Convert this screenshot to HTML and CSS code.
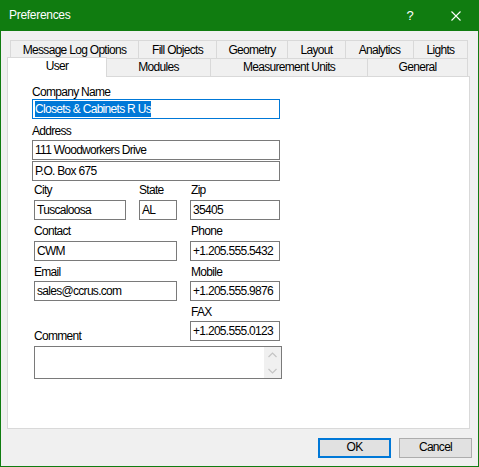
FILE: index.html
```html
<!DOCTYPE html>
<html>
<head>
<meta charset="utf-8">
<link rel="stylesheet" href="styles.css">
</head>
<body>
<div class="window">
  <div class="titlebar">
    <span class="title">Preferences</span>
    <span class="cap help">?</span>
    <span class="cap close"><svg width="10" height="10" viewBox="0 0 10 10"><path d="M0.5 0.5 L9.5 9.5 M9.5 0.5 L0.5 9.5" stroke="#fff" stroke-width="1.1" fill="none"/></svg></span>
  </div>
  <div class="body">
    <div class="tabs">
      <div class="tabrow row1">
        <div class="tab t-msg">Message Log Options</div>
        <div class="tab t-fill">Fill Objects</div>
        <div class="tab t-geo">Geometry</div>
        <div class="tab t-lay">Layout</div>
        <div class="tab t-ana">Analytics</div>
        <div class="tab t-lig">Lights</div>
      </div>
      <div class="tabrow row2">
        <div class="tab active t-user">User</div>
        <div class="tab t-mod">Modules</div>
        <div class="tab t-mea">Measurement Units</div>
        <div class="tab t-gen">General</div>
      </div>
    </div>
    <div class="panel">
      <div class="field wide f-company">
        <div class="lbl">Company Name</div>
        <div class="inp focus"><span class="sel">Closets &amp; Cabinets R Us</span></div>
      </div>
      <div class="field wide f-address">
        <div class="lbl">Address</div>
        <div class="inp">111 Woodworkers Drive</div>
        <div class="inp second">P.O. Box 675</div>
      </div>
      <div class="grid3">
        <div class="field">
          <div class="lbl">City</div>
          <div class="inp">Tuscaloosa</div>
        </div>
        <div class="field">
          <div class="lbl">State</div>
          <div class="inp">AL</div>
        </div>
        <div class="field rc">
          <div class="lbl">Zip</div>
          <div class="inp">35405</div>
        </div>
      </div>
      <div class="cols">
        <div class="col left">
          <div class="lbl">Contact</div>
          <div class="inp">CWM</div>
          <div class="lbl next">Email</div>
          <div class="inp">sales@ccrus.com</div>
          <div class="lbl comment">Comment</div>
        </div>
        <div class="col rc">
          <div class="lbl">Phone</div>
          <div class="inp">+1.205.555.5432</div>
          <div class="lbl next">Mobile</div>
          <div class="inp">+1.205.555.9876</div>
          <div class="lbl next">FAX</div>
          <div class="inp">+1.205.555.0123</div>
        </div>
      </div>
      <div class="ta">
        <div class="sb">
          <svg width="9" height="6" viewBox="0 0 9 6"><path d="M0.5 5 L4.5 1 L8.5 5" stroke="#c4c4c4" stroke-width="1.2" fill="none"/></svg>
          <svg width="9" height="6" viewBox="0 0 9 6"><path d="M0.5 1 L4.5 5 L8.5 1" stroke="#c4c4c4" stroke-width="1.2" fill="none"/></svg>
        </div>
      </div>
    </div>
    <div class="buttons">
      <div class="btn default">OK</div>
      <div class="btn">Cancel</div>
    </div>
  </div>
</div>
</body>
</html>
```
FILE: styles.css
```css
* { box-sizing: border-box; }
html, body { margin: 0; padding: 0; }
body {
  width: 479px;
  height: 467px;
  overflow: hidden;
  font-family: "Liberation Sans", Arial, sans-serif;
  font-size: 12px;
  letter-spacing: -0.7px;
  color: #000;
  background: #f0f0f0;
}
.window { width: 479px; height: 467px; }
.titlebar {
  display: flex;
  height: 31px;
  background: #107c10;
  color: #fff;
}
.title {
  flex: 1;
  padding-left: 9px;
  line-height: 31px;
  letter-spacing: -0.3px;
}
.cap {
  width: 46px;
  height: 31px;
  display: flex;
  align-items: center;
  justify-content: center;
}
.help { display: block; text-align: center; line-height: 31px; letter-spacing: 0; font-size: 13px; }
.body {
  height: 436px;
  border: 1px solid #107c10;
  border-top: 0;
  background: #f0f0f0;
}
.tabs { padding-top: 9px; }
.tabrow { display: flex; align-items: flex-start; }
.tab {
  text-align: center;
  white-space: nowrap;
  border-top: 1px solid #d9d9d9;
  border-right: 1px solid #d9d9d9;
  background: #f0f0f0;
}
.row1 { margin-left: 9px; height: 18px; }
.row1 .tab { height: 18px; padding-top: 1px; line-height: 16px; }
.row1 .tab:first-child { border-left: 1px solid #d9d9d9; }
.t-msg { width: 129px; }
.t-fill { width: 78px; }
.t-geo { width: 71px; }
.t-lay { width: 58px; }
.t-ana { width: 68px; }
.t-lig { width: 54px; }
.row2 { margin-left: 6px; height: 18px; }
.row2 .tab { height: 18px; line-height: 17px; }
.row2 .tab.active {
  height: 20px;
  margin-top: -1px;
  border-left: 1px solid #d9d9d9;
  background: #fff;
  line-height: 16px;
  position: relative;
  z-index: 1;
}
.t-user { width: 100px; }
.t-mod { width: 104px; }
.t-mea { width: 157px; }
.t-gen { width: 100px; }
.panel {
  margin-left: 6px;
  width: 463px;
  height: 353px;
  background: #fff;
  border: 1px solid #d9d9d9;
  padding: 8px 0 0 26px;
}
.lbl { height: 14px; line-height: 14px; white-space: nowrap; }
.inp {
  height: 20px;
  border: 1px solid #7a7a7a;
  background: #fff;
  padding: 0 2px;
  line-height: 18px;
  white-space: nowrap;
  overflow: hidden;
}
.wide { margin-left: -2px; width: 248px; }
.inp.focus { border-color: #0078d7; padding-top: 1px; }
.sel {
  display: inline-block;
  height: 16px;
  line-height: 16px;
  background: #0078d7;
  color: #fff;
  vertical-align: top;
}
.f-address { margin-top: 5px; }
.f-address .lbl { margin-bottom: 2px; }
.inp.second { margin-top: 1px; }
.grid3 {
  display: grid;
  grid-template-columns: 92px 38px 90px;
  column-gap: 13px;
  margin-top: 2px;
}
.grid3 .lbl { margin-bottom: 3px; }
.rc .lbl { padding-left: 1px; }
.cols {
  display: grid;
  grid-template-columns: 143px 90px;
  column-gap: 13px;
  margin-top: 4px;
}
.col { display: flex; flex-direction: column; }
.col .lbl { margin-bottom: 3px; }
.col .lbl.next { margin-top: 4px; margin-bottom: 2px; }
.col .lbl.comment { margin-top: auto; margin-bottom: -2px; }
.ta {
  margin-top: 5px;
  width: 248px;
  height: 33px;
  border: 1px solid #7a7a7a;
  background: #fff;
  display: flex;
  justify-content: flex-end;
}
.sb {
  width: 17px;
  background: #f0f0f0;
  display: flex;
  flex-direction: column;
  align-items: center;
  justify-content: space-between;
  padding: 5px 0 4px;
}
.buttons {
  display: flex;
  justify-content: flex-end;
  gap: 8px;
  margin-top: 9px;
  padding-right: 6px;
}
.btn {
  width: 73px;
  height: 20px;
  background: #e1e1e1;
  border: 1px solid #adadad;
  text-align: center;
  line-height: 17px;
}
.btn.default { border: 2px solid #0078d7; line-height: 15px; }
```
